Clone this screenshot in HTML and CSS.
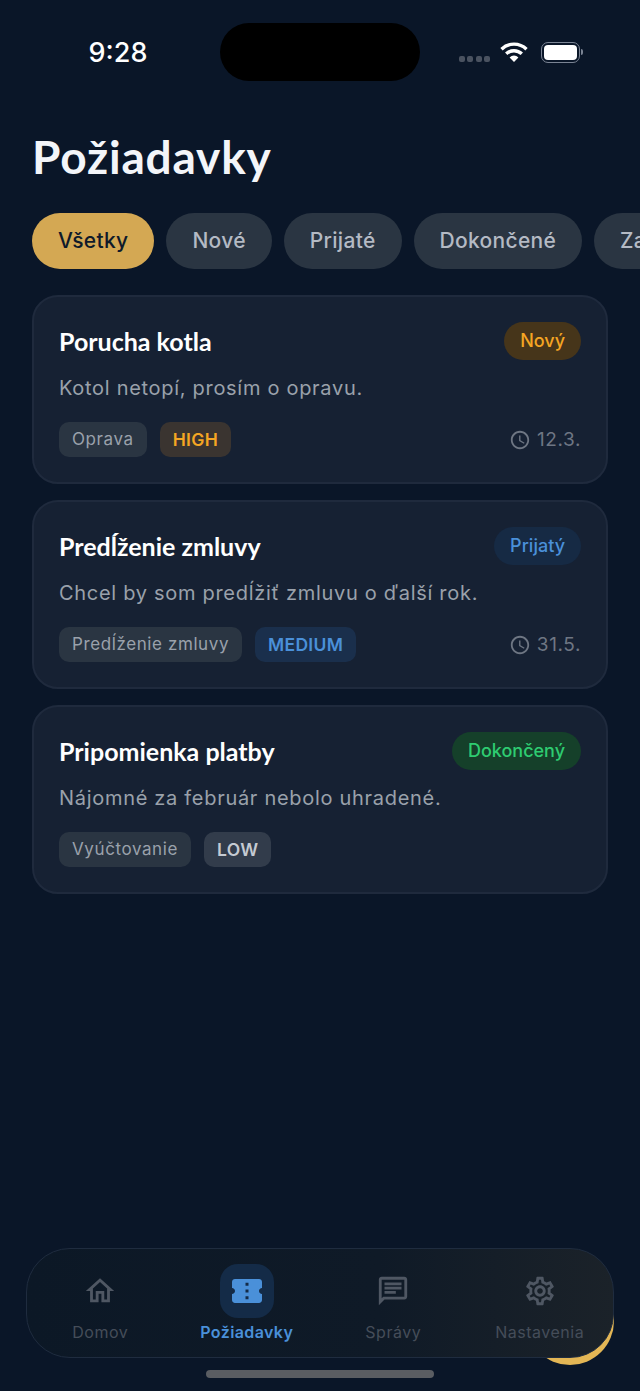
FILE: index.html
```html
<!DOCTYPE html>
<html lang="sk">
<head>
    <meta charset="UTF-8">
    <meta name="viewport" content="width=device-width, initial-scale=1.0">
    <title>Požiadavky</title>
    <link rel="stylesheet" href="styles.css">
</head>
<body>
    <div class="status-bar">
        <span class="status-time">9:28</span>
        <div class="island"></div>
        <div class="status-icons">
            <div class="signal"><i></i><i></i><i></i><i></i></div>
            <svg class="wifi" viewBox="0 0 28 22" width="28" height="22">
                <path d="M1.5 8.2a18 18 0 0 1 25 0" fill="none" stroke="#fff" stroke-width="3.4"/>
                <path d="M6.2 12.8a11.4 11.4 0 0 1 15.6 0" fill="none" stroke="#fff" stroke-width="3.4"/>
                <path d="M14 21l-4.4-4.6a6.2 6.2 0 0 1 8.8 0z" fill="#fff"/>
            </svg>
            <div class="battery"><div class="battery-level"></div></div>
            <div class="battery-cap"></div>
        </div>
    </div>

    <h1 class="page-title">Požiadavky</h1>

    <div class="chips">
        <div class="chip active">Všetky</div>
        <div class="chip">Nové</div>
        <div class="chip">Prijaté</div>
        <div class="chip">Dokončené</div>
        <div class="chip">Zamietnuté</div>
    </div>

    <main class="cards">
        <div class="card">
            <div class="card-top">
                <h2>Porucha kotla</h2>
                <span class="badge badge-new">Nový</span>
            </div>
            <p class="card-text">Kotol netopí, prosím o opravu.</p>
            <div class="card-bottom">
                <span class="tag">Oprava</span>
                <span class="tag prio prio-high">HIGH</span>
                <span class="date">
                    <svg viewBox="0 0 24 24" width="22" height="22"><path d="M11.99 2C6.47 2 2 6.48 2 12s4.47 10 9.99 10C17.52 22 22 17.52 22 12S17.52 2 11.99 2zM12 20c-4.42 0-8-3.58-8-8s3.58-8 8-8 8 3.58 8 8-3.58 8-8 8zm.5-13H11v6l5.25 3.15.75-1.23-4.5-2.67z"/></svg>
                    12.3.
                </span>
            </div>
        </div>

        <div class="card">
            <div class="card-top">
                <h2>Predĺženie zmluvy</h2>
                <span class="badge badge-accepted">Prijatý</span>
            </div>
            <p class="card-text">Chcel by som predĺžiť zmluvu o ďalší rok.</p>
            <div class="card-bottom">
                <span class="tag">Predĺženie zmluvy</span>
                <span class="tag prio prio-medium">MEDIUM</span>
                <span class="date">
                    <svg viewBox="0 0 24 24" width="22" height="22"><path d="M11.99 2C6.47 2 2 6.48 2 12s4.47 10 9.99 10C17.52 22 22 17.52 22 12S17.52 2 11.99 2zM12 20c-4.42 0-8-3.58-8-8s3.58-8 8-8 8 3.58 8 8-3.58 8-8 8zm.5-13H11v6l5.25 3.15.75-1.23-4.5-2.67z"/></svg>
                    31.5.
                </span>
            </div>
        </div>

        <div class="card">
            <div class="card-top">
                <h2>Pripomienka platby</h2>
                <span class="badge badge-done">Dokončený</span>
            </div>
            <p class="card-text">Nájomné za február nebolo uhradené.</p>
            <div class="card-bottom">
                <span class="tag">Vyúčtovanie</span>
                <span class="tag prio prio-low">LOW</span>
            </div>
        </div>
    </main>

    <div class="nav-wrap">
        <div class="fab"></div>
        <nav class="nav">
            <div class="nav-item">
                <div class="nav-icon">
                    <svg viewBox="0 0 24 24" width="34" height="34"><path d="M12 5.69l5 4.5V18h-2v-6H9v6H7v-7.81l5-4.5M12 3L2 12h3v8h6v-6h2v6h6v-8h3L12 3z"/></svg>
                </div>
                <span>Domov</span>
            </div>
            <div class="nav-item selected">
                <div class="nav-icon">
                    <svg viewBox="0 0 24 24" width="36" height="36"><path d="M22 10V6c0-1.11-.9-2-2-2H4c-1.1 0-1.99.89-1.99 2v4c1.1 0 1.99.9 1.99 2s-.89 2-2 2v4c0 1.1.9 2 2 2h16c1.1 0 2-.9 2-2v-4c-1.1 0-2-.9-2-2s.9-2 2-2zm-9 7.5h-2v-2h2v2zm0-4.5h-2v-2h2v2zm0-4.5h-2v-2h2v2z"/></svg>
                </div>
                <span>Požiadavky</span>
            </div>
            <div class="nav-item">
                <div class="nav-icon">
                    <svg viewBox="0 0 24 24" width="34" height="34"><path d="M20 2H4c-1.1 0-1.99.9-1.99 2L2 22l4-4h14c1.1 0 2-.9 2-2V4c0-1.1-.9-2-2-2zm0 14H5.17L4 17.17V4h16v12zM6 12h8v2H6zm0-3h12v2H6zm0-3h12v2H6z"/></svg>
                </div>
                <span>Správy</span>
            </div>
            <div class="nav-item">
                <div class="nav-icon">
                    <svg viewBox="0 0 24 24" width="34" height="34"><path d="M19.43 12.98c.04-.32.07-.64.07-.98 0-.34-.03-.66-.07-.98l2.11-1.65c.19-.15.24-.42.12-.64l-2-3.46c-.09-.16-.26-.25-.44-.25-.06 0-.12.01-.17.03l-2.49 1c-.52-.4-1.08-.73-1.69-.98l-.38-2.65C14.46 2.18 14.25 2 14 2h-4c-.25 0-.46.18-.49.42l-.38 2.65c-.61.25-1.17.59-1.69.98l-2.49-1c-.06-.02-.12-.03-.18-.03-.17 0-.34.09-.43.25l-2 3.46c-.13.22-.07.49.12.64l2.11 1.65c-.04.32-.07.65-.07.98 0 .33.03.66.07.98l-2.11 1.65c-.19.15-.24.42-.12.64l2 3.46c.09.16.26.25.44.25.06 0 .12-.01.17-.03l2.49-1c.52.4 1.08.73 1.69.98l.38 2.65c.03.24.24.42.49.42h4c.25 0 .46-.18.49-.42l.38-2.65c.61-.25 1.17-.59 1.69-.98l2.49 1c.06.02.12.03.18.03.17 0 .34-.09.43-.25l2-3.46c.12-.22.07-.49-.12-.64l-2.11-1.65zm-1.98-1.71c.04.31.05.52.05.73 0 .21-.02.43-.05.73l-.14 1.13.89.7 1.08.84-.7 1.21-1.27-.51-1.04-.42-.9.68c-.43.32-.84.56-1.25.73l-1.06.43-.16 1.13-.2 1.35h-1.4l-.19-1.35-.16-1.13-1.06-.43c-.43-.18-.83-.41-1.23-.71l-.91-.7-1.06.43-1.27.51-.7-1.21 1.08-.84.89-.7-.14-1.13c-.03-.31-.05-.54-.05-.74s.02-.43.05-.73l.14-1.13-.89-.7-1.08-.84.7-1.21 1.27.51 1.04.42.9-.68c.43-.32.84-.56 1.25-.73l1.06-.43.16-1.13.2-1.35h1.39l.19 1.35.16 1.13 1.06.43c.43.18.83.41 1.23.71l.91.7 1.06-.43 1.27-.51.7 1.21-1.07.85-.89.7.14 1.13zM12 8c-2.21 0-4 1.79-4 4s1.79 4 4 4 4-1.79 4-4-1.79-4-4-4zm0 6c-1.1 0-2-.9-2-2s.9-2 2-2 2 .9 2 2-.9 2-2 2z"/></svg>
                </div>
                <span>Nastavenia</span>
            </div>
        </nav>
    </div>

    <div class="home-bar"></div>
</body>
</html>
```

FILE: styles.css
```css
:root {
    --bg: #0a1628;
    --card-bg: #162133;
    --card-border: #1f2a3d;
    --chip-bg: #2a3542;
    --gold: #d4a853;
    --blue: #4a90d9;
    --orange: #f5a623;
    --green: #2ecc71;
    --muted: #9aa1ab;
}

* {
    box-sizing: border-box;
}

body {
    margin: 0;
    height: 100vh;
    overflow: hidden;
    display: flex;
    flex-direction: column;
    background-color: var(--bg);
    color: #fff;
    font-family: Inter, sans-serif;
}

/* status bar */
.status-bar {
    display: grid;
    grid-template-columns: 220px 200px 220px;
    align-items: center;
    padding-top: 23px;
}

.status-time {
    justify-self: center;
    margin-left: 16px;
    font-size: 27px;
    font-weight: 500;
    color: #fff;
}

.island {
    height: 58px;
    border-radius: 29px;
    background-color: #000;
}

.status-icons {
    display: flex;
    align-items: center;
    padding-left: 39px;
}

.signal {
    display: flex;
    gap: 2.3px;
    margin-top: 13px;
    margin-right: 10px;
}

.signal i {
    width: 6px;
    height: 6px;
    border-radius: 2px;
    background-color: #4a5260;
}

.wifi {
    margin-right: 13px;
    margin-top: 0;
}

.battery {
    width: 39px;
    height: 21px;
    padding: 2px;
    border: 1.5px solid #7b8494;
    border-radius: 7px;
}

.battery-level {
    height: 100%;
    border-radius: 4px;
    background-color: #fff;
}

.battery-cap {
    width: 2px;
    height: 6px;
    margin-left: 1px;
    border-radius: 0 2px 2px 0;
    background-color: #7b8494;
}

/* header */
.page-title {
    margin: 46px 0 0 32px;
    font-family: Lato, sans-serif;
    font-size: 46px;
    line-height: 60px;
    font-weight: 700;
    letter-spacing: 0.8px;
    color: #f3f5f9;
}

.chips {
    display: flex;
    gap: 12px;
    margin-top: 26px;
    padding-left: 32px;
    overflow: hidden;
}

.chip {
    flex-shrink: 0;
    height: 56px;
    padding: 0 26px;
    border-radius: 28px;
    background-color: var(--chip-bg);
    color: #b4bac4;
    font-size: 21px;
    font-weight: 500;
    letter-spacing: 0.3px;
    line-height: 56px;
}

.chip.active {
    background-color: var(--gold);
    color: #0f1a2a;
}

/* cards */
.cards {
    flex: 1;
    display: flex;
    flex-direction: column;
    gap: 16px;
    padding: 26px 32px 0;
}

.card {
    padding: 25px;
    border: 2px solid var(--card-border);
    border-radius: 26px;
    background-color: var(--card-bg);
}

.card-top {
    display: flex;
    justify-content: space-between;
    align-items: center;
}

.card-top h2 {
    margin: 0;
    font-family: Lato, sans-serif;
    font-size: 25px;
    font-weight: 700;
    color: #fff;
}

.badge {
    height: 38px;
    padding: 0 16px;
    border-radius: 19px;
    font-size: 18px;
    font-weight: 500;
    line-height: 38px;
}

.badge-new {
    background-color: #46351a;
    color: var(--orange);
}

.badge-accepted {
    background-color: #162a44;
    color: var(--blue);
}

.badge-done {
    background-color: #15402a;
    color: var(--green);
}

.card-text {
    margin: 13px 0 0;
    font-size: 20px;
    line-height: 30px;
    letter-spacing: 0.7px;
    color: var(--muted);
}

.card-bottom {
    display: flex;
    align-items: center;
    gap: 13px;
    margin-top: 19px;
}

.tag {
    height: 35px;
    padding: 0 13px;
    border-radius: 10px;
    background-color: #2a3542;
    color: var(--muted);
    font-size: 17px;
    letter-spacing: 0.6px;
    line-height: 35px;
}

.prio {
    font-size: 17.5px;
    font-weight: 600;
    letter-spacing: 0.3px;
}

.prio-high {
    background-color: #3a3430;
    color: var(--orange);
}

.prio-medium {
    background-color: #1a2f4c;
    color: var(--blue);
}

.prio-low {
    background-color: #323c4b;
    color: #c5cad2;
}

.date {
    display: flex;
    align-items: center;
    gap: 6px;
    margin-left: auto;
    color: #6e7683;
    font-size: 19px;
    letter-spacing: 0.6px;
}

.date svg {
    fill: #6e7683;
}

/* bottom nav */
.nav-wrap {
    position: relative;
    margin: 0 26px;
}

.fab {
    position: absolute;
    right: 0;
    bottom: -7px;
    width: 88px;
    height: 88px;
    border-radius: 50%;
    background-color: #e3b655;
}

.nav {
    position: relative;
    display: grid;
    grid-template-columns: repeat(4, 1fr);
    height: 110px;
    border: 1.5px solid #1f2c3f;
    border-radius: 44px;
    background: linear-gradient(90deg, #0c1826 0%, #0f1a27 60%, #1b2229 100%);
}

.nav-item {
    display: flex;
    flex-direction: column;
    align-items: center;
    padding-top: 15px;
    color: #454d59;
    font-size: 16px;
    letter-spacing: 0.5px;
}

.nav-icon {
    display: flex;
    align-items: center;
    justify-content: center;
    width: 54px;
    height: 54px;
    margin-bottom: 4px;
    border-radius: 18px;
}

.nav-icon svg {
    fill: #4f5763;
}

.nav-item.selected {
    color: var(--blue);
    font-weight: 600;
    letter-spacing: 0.4px;
}

.nav-item.selected .nav-icon {
    background-color: #142b47;
}

.nav-item.selected .nav-icon svg {
    fill: var(--blue);
}

.home-bar {
    align-self: center;
    width: 228px;
    height: 8px;
    margin: 12px 0 13px;
    border-radius: 4px;
    background-color: #5a5d62;
}
```
